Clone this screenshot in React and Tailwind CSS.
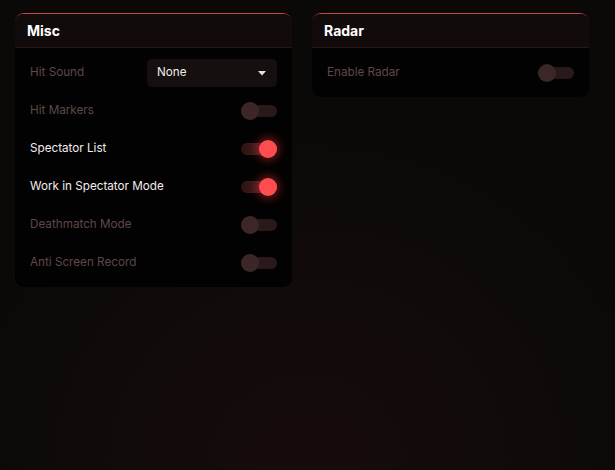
import React from "react";

function Toggle({ on }) {
  return (
    <div className="relative w-[36px] h-[18px] flex items-center">
      <div
        className={
          "w-full h-[12px] rounded-full " +
          (on ? "bg-gradient-to-r from-[#2a1414] to-[#5e2222]" : "bg-[#2a191a]")
        }
      />
      <div
        className={
          "absolute top-0 w-[18px] h-[18px] rounded-full " +
          (on
            ? "right-0 bg-[#ff4d4f] shadow-[0_0_10px_2px_rgba(255,60,60,0.45)]"
            : "left-0 bg-[#3b2628]")
        }
      />
    </div>
  );
}

function Row({ label, on, children }) {
  return (
    <div className="h-[38px] flex items-center justify-between">
      <span className={"text-[11.7px] " + (on ? "text-[#f3ecec]" : "text-[#5e4848]")}>{label}</span>
      {children ?? <Toggle on={on} />}
    </div>
  );
}

function Panel({ title, children }) {
  return (
    <div className="w-[277px] rounded-[9px] bg-[#030202] border-t border-[#c9454a] overflow-hidden">
      <div className="h-[34px] flex items-center px-3 bg-[#110b0b] border-b border-[#2a1517]">
        <span className="text-[14px] font-bold text-white">{title}</span>
      </div>
      <div className="px-[15px] pt-[6px] pb-[5px]">{children}</div>
    </div>
  );
}

export default function App() {
  return (
    <div
      className="w-[615px] h-[470px] bg-[#0c0a09] bg-[radial-gradient(ellipse_60%_75%_at_50%_100%,#170c0c_0%,#110b0a_50%,#0b0908_100%)] flex items-start gap-[20px] pl-[15px] pt-[13px]"
      style={{ fontFamily: "Inter, 'Noto Sans', sans-serif" }}
    >
      <Panel title="Misc">
        <Row label="Hit Sound" on={false}>
          <div className="w-[130px] h-[28px] rounded-[5px] bg-[#150f0f] flex items-center justify-between pl-[10px] pr-[11px]">
            <span className="text-[11.7px] text-[#f3ecec]">None</span>
            <svg width="8" height="5" viewBox="0 0 8 5">
              <path d="M0 0 L8 0 L4 4.5 Z" fill="#e8e0e0" />
            </svg>
          </div>
        </Row>
        <Row label="Hit Markers" on={false} />
        <Row label="Spectator List" on={true} />
        <Row label="Work in Spectator Mode" on={true} />
        <Row label="Deathmatch Mode" on={false} />
        <Row label="Anti Screen Record" on={false} />
      </Panel>
      <Panel title="Radar">
        <Row label="Enable Radar" on={false} />
      </Panel>
    </div>
  );
}
